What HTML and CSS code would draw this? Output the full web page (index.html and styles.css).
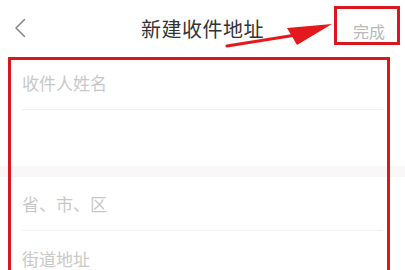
FILE: index.html
```html
<!DOCTYPE html>
<html lang="zh">
<head>
<meta charset="utf-8">
<title>新建收件地址</title>
<link rel="stylesheet" href="styles.css">
</head>
<body>
<div class="page">
  <header class="nav">
    <div class="nav-left">
      <svg class="back" width="12" height="20" viewBox="0 0 12 20"><path d="M10.5 1.5 L2 10 L10.5 18.5" fill="none" stroke="#8a8a8a" stroke-width="1.6" stroke-linecap="round" stroke-linejoin="round"/></svg>
    </div>
    <h1 class="title">新建收件地址</h1>
    <div class="nav-right"><span class="done">完成</span></div>
  </header>
  <main class="form">
    <section class="group">
      <div class="row"><span class="ph">收件人姓名</span></div>
      <div class="row row-tall"><span class="ph"></span></div>
    </section>
    <div class="gap"></div>
    <section class="group">
      <div class="row"><span class="ph">省、市、区</span></div>
      <div class="row"><span class="ph">街道地址</span></div>
    </section>
  </main>

  <div class="mark mark-form"></div>
  <div class="mark mark-done"></div>
  <svg class="arrow" width="405" height="270" viewBox="0 0 405 270">
    <path d="M227 46 L296 35" stroke="#e3191e" stroke-width="3.2" stroke-linecap="round" fill="none"/>
    <polygon points="332,24 287,28 297,45" fill="#e3191e"/>
  </svg>
</div>
</body>
</html>
```

FILE: styles.css
```css
* { box-sizing: border-box; }
html, body { margin: 0; padding: 0; background: #ffffff; }
body {
  font-family: "Noto Sans CJK SC", "Noto Sans", sans-serif;
  width: 405px;
  height: 270px;
  overflow: hidden;
}
.page { position: relative; width: 405px; height: 270px; overflow: hidden; }

.nav {
  height: 56px;
  display: grid;
  grid-template-columns: 1fr auto 1fr;
  align-items: center;
}
.nav-left { padding-left: 14px; display: flex; align-items: center; }
.back { display: block; }
.title {
  margin: 0;
  font-size: 20px;
  font-weight: 400;
  color: #333333;
  letter-spacing: 0.5px;
  line-height: 1;
  padding-top: 2px;
}
.nav-right { display: flex; justify-content: flex-end; padding-right: 20px; }
.done { font-size: 16px; color: #b9b9b9; line-height: 1; padding-top: 5px; }

.form { display: flex; flex-direction: column; }
.group { display: flex; flex-direction: column; }
.row {
  height: 54px;
  margin: 0 22px;
  display: flex;
  align-items: center;
  border-bottom: 1px solid #f1f1f1;
}
.row-tall { height: 56px; border-bottom: none; }
.group:last-child .row:last-child { border-bottom: none; }
.ph { font-size: 17px; color: #c8c8c8; line-height: 1; }
.gap { height: 11px; background: #f9f7f7; }

.mark { position: absolute; border: 3px solid #d8181e; }
.mark-form { left: 8px; top: 57px; width: 382px; height: 240px; }
.mark-done { left: 334px; top: 6px; width: 66px; height: 39px; }
.arrow { position: absolute; left: 0; top: 0; }
```
